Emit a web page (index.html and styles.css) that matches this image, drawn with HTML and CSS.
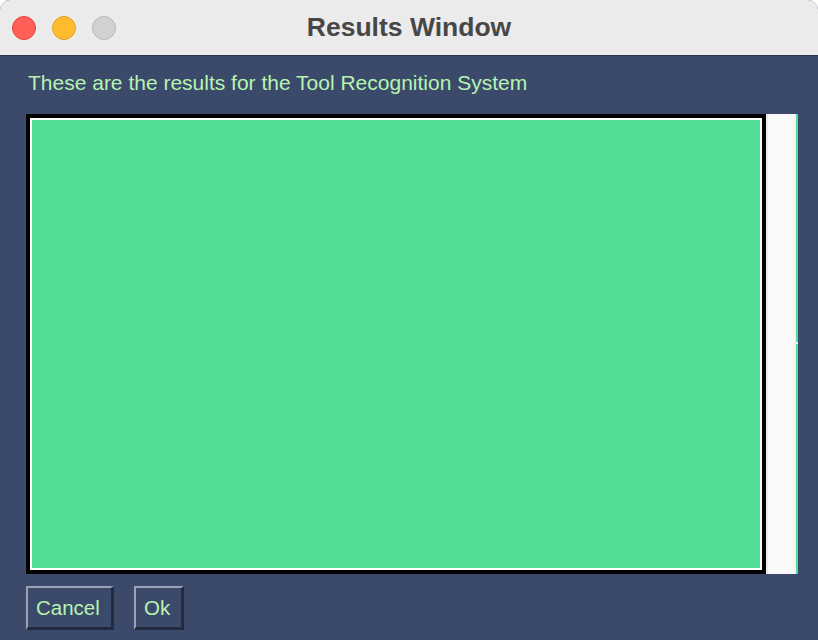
FILE: index.html
```html
<!DOCTYPE html>
<html>
<head>
<meta charset="utf-8">
<link rel="stylesheet" href="styles.css">
</head>
<body>
<div class="window">
  <div class="titlebar">
    <div class="lights">
      <span class="light red"></span>
      <span class="light yellow"></span>
      <span class="light gray"></span>
    </div>
    <div class="title">Results Window</div>
  </div>
  <div class="content">
    <div class="label">These are the results for the Tool Recognition System</div>
    <div class="panel">
      <div class="frame"><div class="green"></div></div>
      <div class="scrollbar"></div>
      <div class="edge"><span class="tick"></span></div>
    </div>
    <div class="buttons">
      <button class="btn cancel">Cancel</button>
      <button class="btn ok">Ok</button>
    </div>
  </div>
</div>
</body>
</html>
```
FILE: styles.css
```css
html, body {
  margin: 0;
  padding: 0;
  background: #ffffff;
}
.window {
  width: 818px;
  height: 640px;
  border-radius: 10px 10px 0 0;
  overflow: hidden;
  display: flex;
  flex-direction: column;
  background: #3b4a6b;
  font-family: "Liberation Sans", Arial, sans-serif;
}
.titlebar {
  height: 55px;
  flex: none;
  background: #ebebeb;
  border-bottom: 1px solid #27324b;
  display: flex;
  align-items: center;
  position: relative;
}
.lights {
  display: flex;
  gap: 16px;
  padding-left: 12px;
  padding-top: 1px;
}
.light {
  width: 24px;
  height: 24px;
  border-radius: 50%;
  box-sizing: border-box;
  display: block;
}
.red { background: #ff5f57; border: 1px solid #e2463f; }
.yellow { background: #febc2e; border: 1px solid #dea226; }
.gray { background: #d1d1d1; border: 1px solid #b6b6b6; }
.title {
  position: absolute;
  left: 0;
  right: 0;
  top: 0;
  bottom: 0;
  display: flex;
  align-items: center;
  justify-content: center;
  font-weight: bold;
  font-size: 26.5px;
  color: #474747;
  padding-bottom: 1px;
}
.content {
  flex: 1;
  padding-left: 26px;
  display: flex;
  flex-direction: column;
}
.label {
  margin-top: 15px;
  padding-left: 2px;
  font-size: 21px;
  line-height: 24px;
  color: #b6f4b0;
}
.panel {
  margin-top: 19px;
  display: flex;
  height: 460px;
}
.frame {
  width: 740px;
  height: 460px;
  box-sizing: border-box;
  border: 4px solid #000000;
}
.green {
  height: 100%;
  box-sizing: border-box;
  border: 2px solid #ffffff;
  background: #52de97;
}
.scrollbar {
  width: 30px;
  box-sizing: border-box;
  background: #f9f9f9;
  border-left: 2px solid #ececec;
  border-right: 1px solid #f0f0f0;
}
.edge {
  width: 2px;
  background: #52de97;
  display: flex;
  align-items: center;
  padding-bottom: 2px;
}
.tick {
  display: block;
  width: 2px;
  height: 2px;
  background: #f4f4f4;
}
.buttons {
  margin-top: 12px;
  display: flex;
  gap: 20px;
}
.btn {
  height: 44px;
  box-sizing: border-box;
  background: #3b4a6b;
  color: #b6f4b0;
  font-family: "Liberation Sans", Arial, sans-serif;
  font-size: 20.5px;
  border-style: solid;
  border-width: 2px 3px 3px 2px;
  border-color: #9aa2b6 #222b3d #222b3d #9aa2b6;
  padding: 0 0 0 8px;
  text-align: left;
  margin: 0;
}
.cancel { width: 88px; }
.ok { width: 50px; }
```
